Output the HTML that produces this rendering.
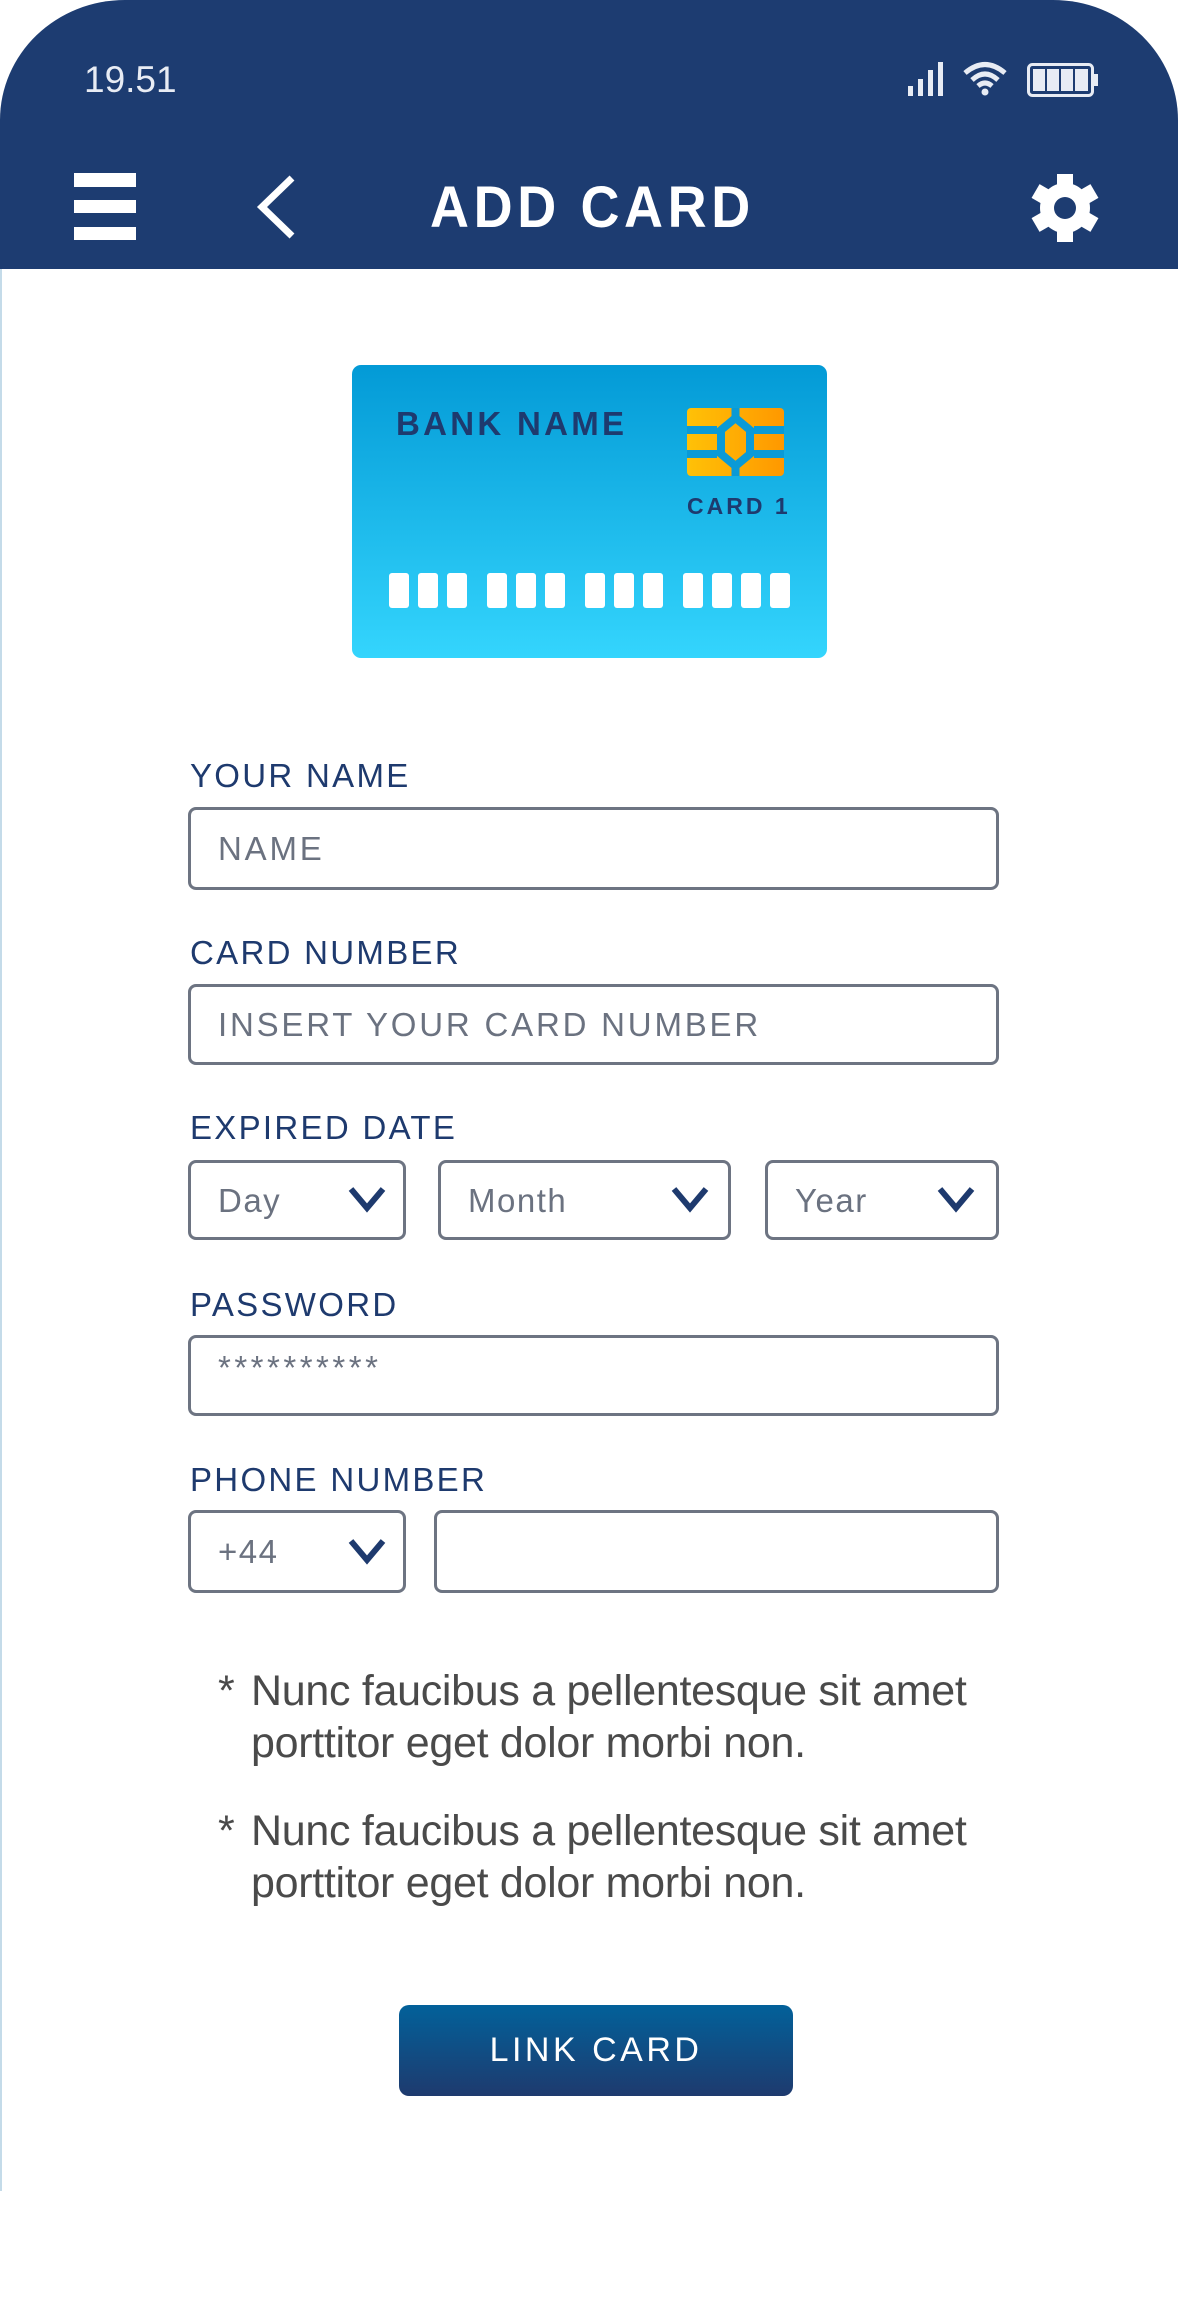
<!DOCTYPE html>
<html><head><meta charset="utf-8"><style>
*{margin:0;padding:0;box-sizing:border-box}
body{width:1178px;height:2305px;background:#fff;position:relative;overflow:hidden;font-family:"Liberation Sans",sans-serif}
.abs{position:absolute}
.hdr{left:0;top:0;width:1178px;height:269px;background:#1d3c71;border-radius:125px 125px 0 0/120px 120px 0 0}
.edge{left:0;top:269px;width:2px;height:1922px;background:#c4dbe9}
.lbl{position:absolute;left:190px;font-size:33px;color:#1e3a6e;letter-spacing:2.3px;line-height:40px}
.box{position:absolute;border:3px solid #6d7482;border-radius:8px}
.ph{position:absolute;left:27px;font-size:33px;color:#6b7280;letter-spacing:2.8px;line-height:40px}
.chev{position:absolute}
.note{position:absolute;left:218px;font-size:43px;color:#4a4a4a;line-height:52px;font-weight:300}
.note span{position:absolute;left:33px;white-space:nowrap;letter-spacing:-0.3px}
.blk{position:absolute;top:573px;width:20px;height:35px;background:#fff;border-radius:3px}
</style></head><body>
<div class="abs hdr"></div>
<div class="abs edge"></div>
<div class="abs" style="left:84px;top:60px;font-size:37px;color:#e8ecf4;line-height:40px">19.51</div>
<svg class="abs" style="left:906px;top:60px" width="40" height="36"><rect x="2" y="26" width="5" height="10" fill="#e8ecf4"/><rect x="12" y="19" width="5" height="17" fill="#e8ecf4"/><rect x="22" y="10" width="5" height="26" fill="#e8ecf4"/><rect x="32" y="2" width="5" height="34" fill="#e8ecf4"/></svg>
<svg class="abs" style="left:962px;top:60px" width="46" height="36" viewBox="0 0 46 36"><path d="M3 13 Q23 -4 43 13" stroke="#e8ecf4" stroke-width="5" fill="none"/><path d="M10 20 Q23 8 36 20" stroke="#e8ecf4" stroke-width="5" fill="none"/><path d="M16 26 Q23 20 30 26" stroke="#e8ecf4" stroke-width="5" fill="none"/><circle cx="23" cy="32" r="3.5" fill="#e8ecf4"/></svg>
<svg class="abs" style="left:1027px;top:63px" width="72" height="34"><rect x="1.5" y="1.5" width="64" height="31" rx="4" fill="none" stroke="#e8ecf4" stroke-width="3"/><rect x="66" y="11" width="5" height="12" fill="#e8ecf4"/><rect x="6" y="6" width="12" height="22" fill="#e8ecf4"/><rect x="20" y="6" width="12" height="22" fill="#e8ecf4"/><rect x="34" y="6" width="12" height="22" fill="#e8ecf4"/><rect x="48" y="6" width="13" height="22" fill="#e8ecf4"/></svg>
<div class="abs" style="left:74px;top:173px;width:62px;height:14px;background:#fff"></div>
<div class="abs" style="left:74px;top:200px;width:62px;height:13px;background:#fff"></div>
<div class="abs" style="left:74px;top:227px;width:62px;height:13px;background:#fff"></div>
<svg class="abs" style="left:255px;top:175px" width="44" height="64"><path d="M37 3 L7 32 L37 61" stroke="#fff" stroke-width="7" fill="none"/></svg>
<div class="abs" style="left:430px;top:178px;font-size:58px;color:#fff;letter-spacing:5px;line-height:60px;font-weight:bold;transform:scaleX(0.93);transform-origin:left">ADD CARD</div>
<svg class="abs" style="left:1031px;top:174px" width="68" height="68" viewBox="-34 -34 68 68">
<g fill="#fff"><rect x="-8" y="-34" width="16" height="68"/><rect x="-8" y="-34" width="16" height="68" transform="rotate(60)"/><rect x="-8" y="-34" width="16" height="68" transform="rotate(120)"/><circle r="25"/></g><circle r="11" fill="#1d3c71"/></svg>

<div class="abs" style="left:352px;top:365px;width:475px;height:293px;border-radius:9px;background:linear-gradient(#039ad6,#34d5fd)"></div>
<div class="abs" style="left:396px;top:406px;font-size:33px;font-weight:bold;color:#1e3a6e;letter-spacing:3.3px;line-height:36px">BANK NAME</div>
<svg class="abs" style="left:687px;top:408px" width="97" height="68" viewBox="0 0 97 68">
<defs><linearGradient id="g" x1="0" x2="1"><stop offset="0" stop-color="#ffc107"/><stop offset="1" stop-color="#ff9800"/></linearGradient></defs>
<rect width="97" height="68" rx="4" fill="url(#g)"/>
<g stroke="#0a9ad6" stroke-width="8" fill="none"><path d="M0 22H30M67 22H97M0 46H30M67 46H97"/><path d="M48.5 10L63 22V46L48.5 58L34 46V22Z"/><path d="M48.5 0V10M48.5 58V68"/></g></svg>
<div class="abs" style="left:687px;top:493px;font-size:23px;font-weight:bold;color:#1e3a6e;letter-spacing:3px;line-height:26px">CARD 1</div>
<div class="blk" style="left:389px"></div><div class="blk" style="left:418px"></div><div class="blk" style="left:447px"></div>
<div class="blk" style="left:487px"></div><div class="blk" style="left:516px"></div><div class="blk" style="left:545px"></div>
<div class="blk" style="left:585px"></div><div class="blk" style="left:614px"></div><div class="blk" style="left:643px"></div>
<div class="blk" style="left:683px"></div><div class="blk" style="left:712px"></div><div class="blk" style="left:741px"></div><div class="blk" style="left:770px"></div>

<div class="lbl" style="top:756px">YOUR NAME</div>
<div class="box" style="left:188px;top:807px;width:811px;height:83px"><div class="ph" style="top:19px">NAME</div></div>
<div class="lbl" style="top:933px">CARD NUMBER</div>
<div class="box" style="left:188px;top:984px;width:811px;height:81px"><div class="ph" style="top:18px">INSERT YOUR CARD NUMBER</div></div>
<div class="lbl" style="top:1108px">EXPIRED DATE</div>
<div class="box" style="left:188px;top:1160px;width:218px;height:80px"><div class="ph" style="top:18px;letter-spacing:1.5px">Day</div></div>
<div class="box" style="left:438px;top:1160px;width:293px;height:80px"><div class="ph" style="top:18px;letter-spacing:1.5px">Month</div></div>
<div class="box" style="left:765px;top:1160px;width:234px;height:80px"><div class="ph" style="top:18px;letter-spacing:1.5px">Year</div></div>
<svg class="chev" style="left:347px;top:1185px" width="40" height="28"><path d="M4 4L20 23L36 4" stroke="#1e3a6e" stroke-width="6" fill="none"/></svg>
<svg class="chev" style="left:670px;top:1185px" width="40" height="28"><path d="M4 4L20 23L36 4" stroke="#1e3a6e" stroke-width="6" fill="none"/></svg>
<svg class="chev" style="left:936px;top:1185px" width="40" height="28"><path d="M4 4L20 23L36 4" stroke="#1e3a6e" stroke-width="6" fill="none"/></svg>
<div class="lbl" style="top:1285px">PASSWORD</div>
<div class="box" style="left:188px;top:1335px;width:811px;height:81px"><div class="ph" style="top:10px;letter-spacing:3.5px">**********</div></div>
<div class="lbl" style="top:1460px">PHONE NUMBER</div>
<div class="box" style="left:188px;top:1510px;width:218px;height:83px"><div class="ph" style="top:19px;letter-spacing:1.5px">+44</div></div>
<svg class="chev" style="left:347px;top:1537px" width="40" height="28"><path d="M4 4L20 23L36 4" stroke="#1e3a6e" stroke-width="6" fill="none"/></svg>
<div class="box" style="left:434px;top:1510px;width:565px;height:83px"></div>

<div class="note" style="top:1665px">*<span>Nunc faucibus a pellentesque sit amet<br>porttitor eget dolor morbi non.</span></div>
<div class="note" style="top:1805px">*<span>Nunc faucibus a pellentesque sit amet<br>porttitor eget dolor morbi non.</span></div>

<div class="abs" style="left:399px;top:2005px;width:394px;height:91px;border-radius:10px;background:linear-gradient(#02619a,#1e3a6e);color:#fff;font-size:34px;letter-spacing:3.5px;text-align:center;line-height:91px">LINK CARD</div>
</body></html>
